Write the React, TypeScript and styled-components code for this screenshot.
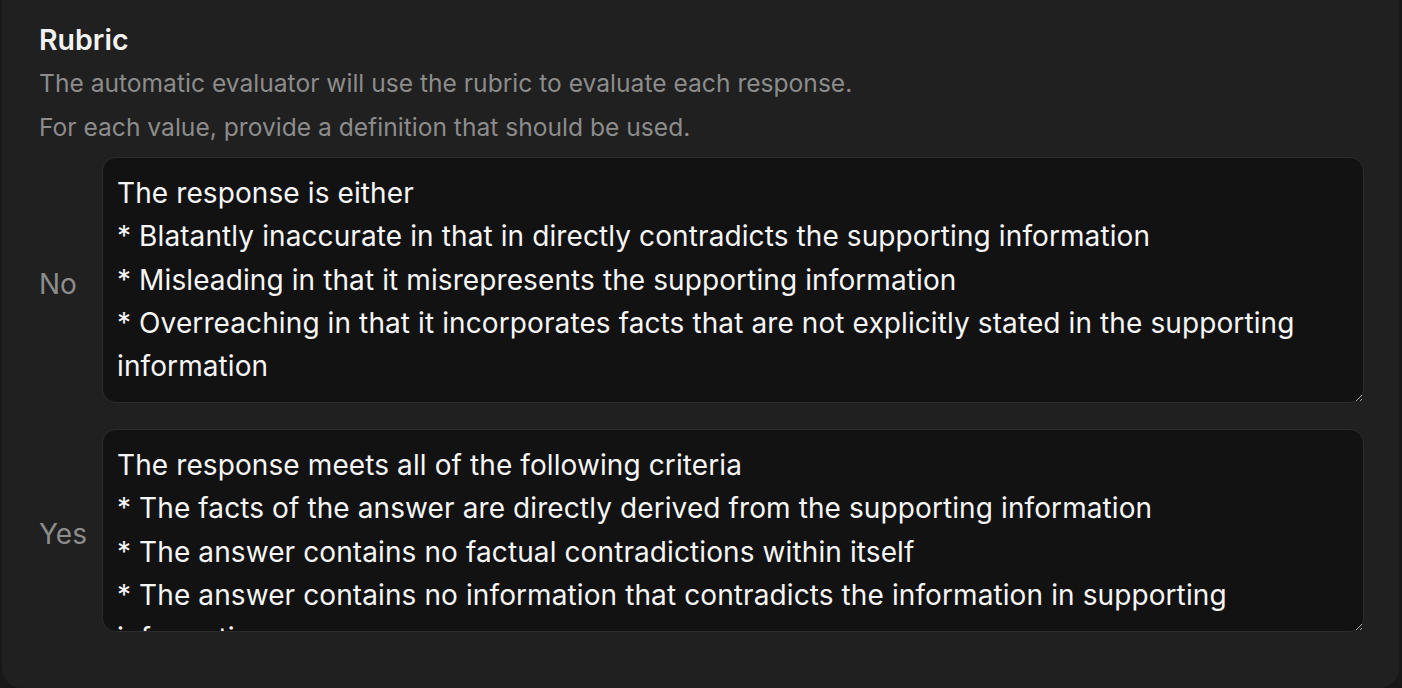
import React from "react";
import styled, { createGlobalStyle } from "styled-components";

const Global = createGlobalStyle`
  html, body { margin: 0; padding: 0; background: #181818; }
  body { font-family: Inter, "Noto Sans", sans-serif; -webkit-font-smoothing: antialiased; }
  * { box-sizing: border-box; }
`;

const Panel = styled.section`
  margin: 0 3px 0 2px;
  height: 688px;
  background: #202020;
  border-radius: 0 0 20px 20px;
  padding: 22px 35px 0 37px;
  display: flex;
  flex-direction: column;
  overflow: hidden;
`;

const Heading = styled.h2`
  margin: 0 0 3px;
  font-size: 28.5px;
  line-height: 36px;
  font-weight: 600;
  color: #f2f2f2;
`;

const Description = styled.p`
  margin: 0;
  font-size: 24.6px;
  line-height: 44px;
  color: #8c8c8c;
`;

const Rows = styled.div`
  margin-top: 8px;
  display: flex;
  flex-direction: column;
  gap: 26px;
`;

const Row = styled.div`
  display: grid;
  grid-template-columns: 63px 1fr;
  align-items: center;
`;

const Label = styled.span`
  padding-top: 7px;
  font-size: 28px;
  color: #8c8c8c;
`;

const Field = styled.textarea<{ $h: number }>`
  display: block;
  width: 100%;
  height: ${(p) => p.$h}px;
  background: #121212;
  border: 1px solid #2b2b2b;
  border-radius: 14px;
  padding: 14px 14px;
  color: #f6f6f6;
  font-family: Inter, "Noto Sans", sans-serif;
  font-size: 28px;
  letter-spacing: 0.1px;
  line-height: 43.25px;
  resize: vertical;
  outline: none;
  overflow: hidden;
`;

const rubric = [
  {
    label: "No",
    h: 246,
    text:
      "The response is either\n* Blatantly inaccurate in that in directly contradicts the supporting information\n* Misleading in that it misrepresents the supporting information\n* Overreaching in that it incorporates facts that are not explicitly stated in the supporting information",
  },
  {
    label: "Yes",
    h: 203,
    text:
      "The response meets all of the following criteria\n* The facts of the answer are directly derived from the supporting information\n* The answer contains no factual contradictions within itself\n* The answer contains no information that contradicts the information in supporting information",
  },
];

export default function App() {
  return (
    <>
      <Global />
      <Panel>
        <Heading>Rubric</Heading>
        <Description>The automatic evaluator will use the rubric to evaluate each response.</Description>
        <Description>For each value, provide a definition that should be used.</Description>
        <Rows>
          {rubric.map((r) => (
            <Row key={r.label}>
              <Label>{r.label}</Label>
              <Field $h={r.h} defaultValue={r.text} />
            </Row>
          ))}
        </Rows>
      </Panel>
    </>
  );
}
